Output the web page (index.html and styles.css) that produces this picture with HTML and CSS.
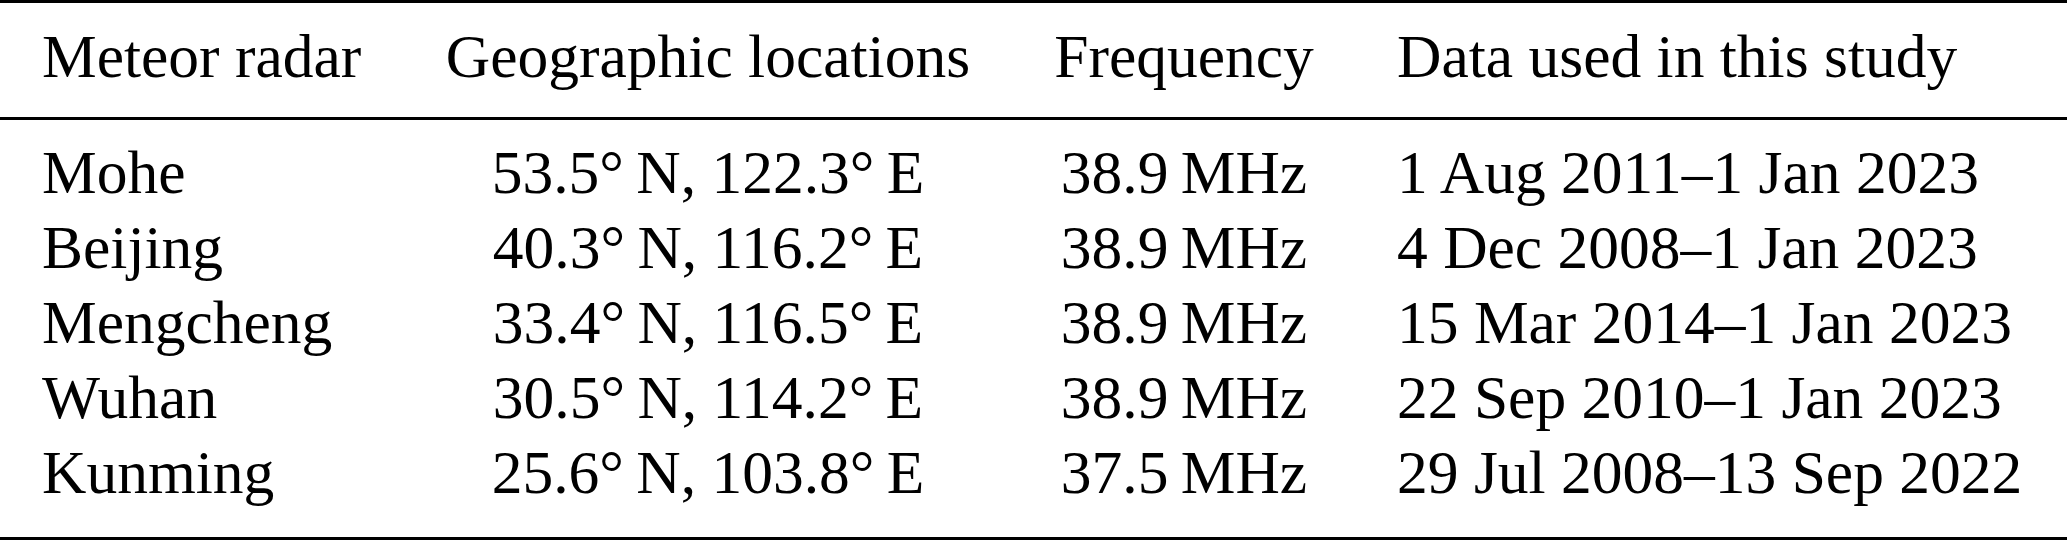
FILE: index.html
```html
<!DOCTYPE html>
<html lang="en">
<head>
    <meta charset="UTF-8">
    <title>Meteor radars</title>
    <link rel="stylesheet" href="styles.css">
</head>
<body>
    <table class="radary">
        <colgroup>
            <col class="c1">
            <col class="c2">
            <col class="c3">
            <col class="c4">
        </colgroup>
        <thead>
            <tr>
                <th class="nazwa">Meteor radar</th>
                <th class="srodek">Geographic locations</th>
                <th class="srodek">Frequency</th>
                <th class="daty">Data used in this study</th>
            </tr>
        </thead>
        <tbody>
            <tr>
                <td class="nazwa">Mohe</td>
                <td class="srodek">53.5°&thinsp;N, 122.3°&thinsp;E</td>
                <td class="srodek">38.9&thinsp;MHz</td>
                <td class="daty">1 Aug 2011–1 Jan 2023</td>
            </tr>
            <tr>
                <td class="nazwa">Beijing</td>
                <td class="srodek">40.3°&thinsp;N, 116.2°&thinsp;E</td>
                <td class="srodek">38.9&thinsp;MHz</td>
                <td class="daty">4 Dec 2008–1 Jan 2023</td>
            </tr>
            <tr>
                <td class="nazwa">Mengcheng</td>
                <td class="srodek">33.4°&thinsp;N, 116.5°&thinsp;E</td>
                <td class="srodek">38.9&thinsp;MHz</td>
                <td class="daty">15 Mar 2014–1 Jan 2023</td>
            </tr>
            <tr>
                <td class="nazwa">Wuhan</td>
                <td class="srodek">30.5°&thinsp;N, 114.2°&thinsp;E</td>
                <td class="srodek">38.9&thinsp;MHz</td>
                <td class="daty">22 Sep 2010–1 Jan 2023</td>
            </tr>
            <tr>
                <td class="nazwa">Kunming</td>
                <td class="srodek">25.6°&thinsp;N, 103.8°&thinsp;E</td>
                <td class="srodek">37.5&thinsp;MHz</td>
                <td class="daty">29 Jul 2008–13 Sep 2022</td>
            </tr>
        </tbody>
    </table>
</body>
</html>
```

FILE: styles.css
```css
body {
    margin: 0;
    background: white;
    overflow: hidden;
}

.radary {
    width: 2067px;
    table-layout: fixed;
    border-collapse: separate;
    border-spacing: 0;
    font-family: "Liberation Serif", "Times New Roman", serif;
    font-size: 61.5px;
    line-height: 75px;
    color: #000;
}

.c1 { width: 430px; }
.c2 { width: 556px; }
.c3 { width: 396px; }
.c4 { width: 685px; }

.radary th,
.radary td {
    padding: 0;
    white-space: nowrap;
    font-weight: normal;
}

.radary th {
    padding-top: 16px;
    padding-bottom: 23px;
    border-top: 3px solid #000;
    border-bottom: 3px solid #000;
}

.radary tbody tr:first-child td {
    padding-top: 15px;
}

.radary tbody tr:last-child td {
    padding-bottom: 27px;
    border-bottom: 3px solid #000;
}

.nazwa {
    text-align: left;
    padding-left: 42px !important;
}

.srodek {
    text-align: center;
}

.daty {
    text-align: left;
    padding-left: 15px !important;
}
```
